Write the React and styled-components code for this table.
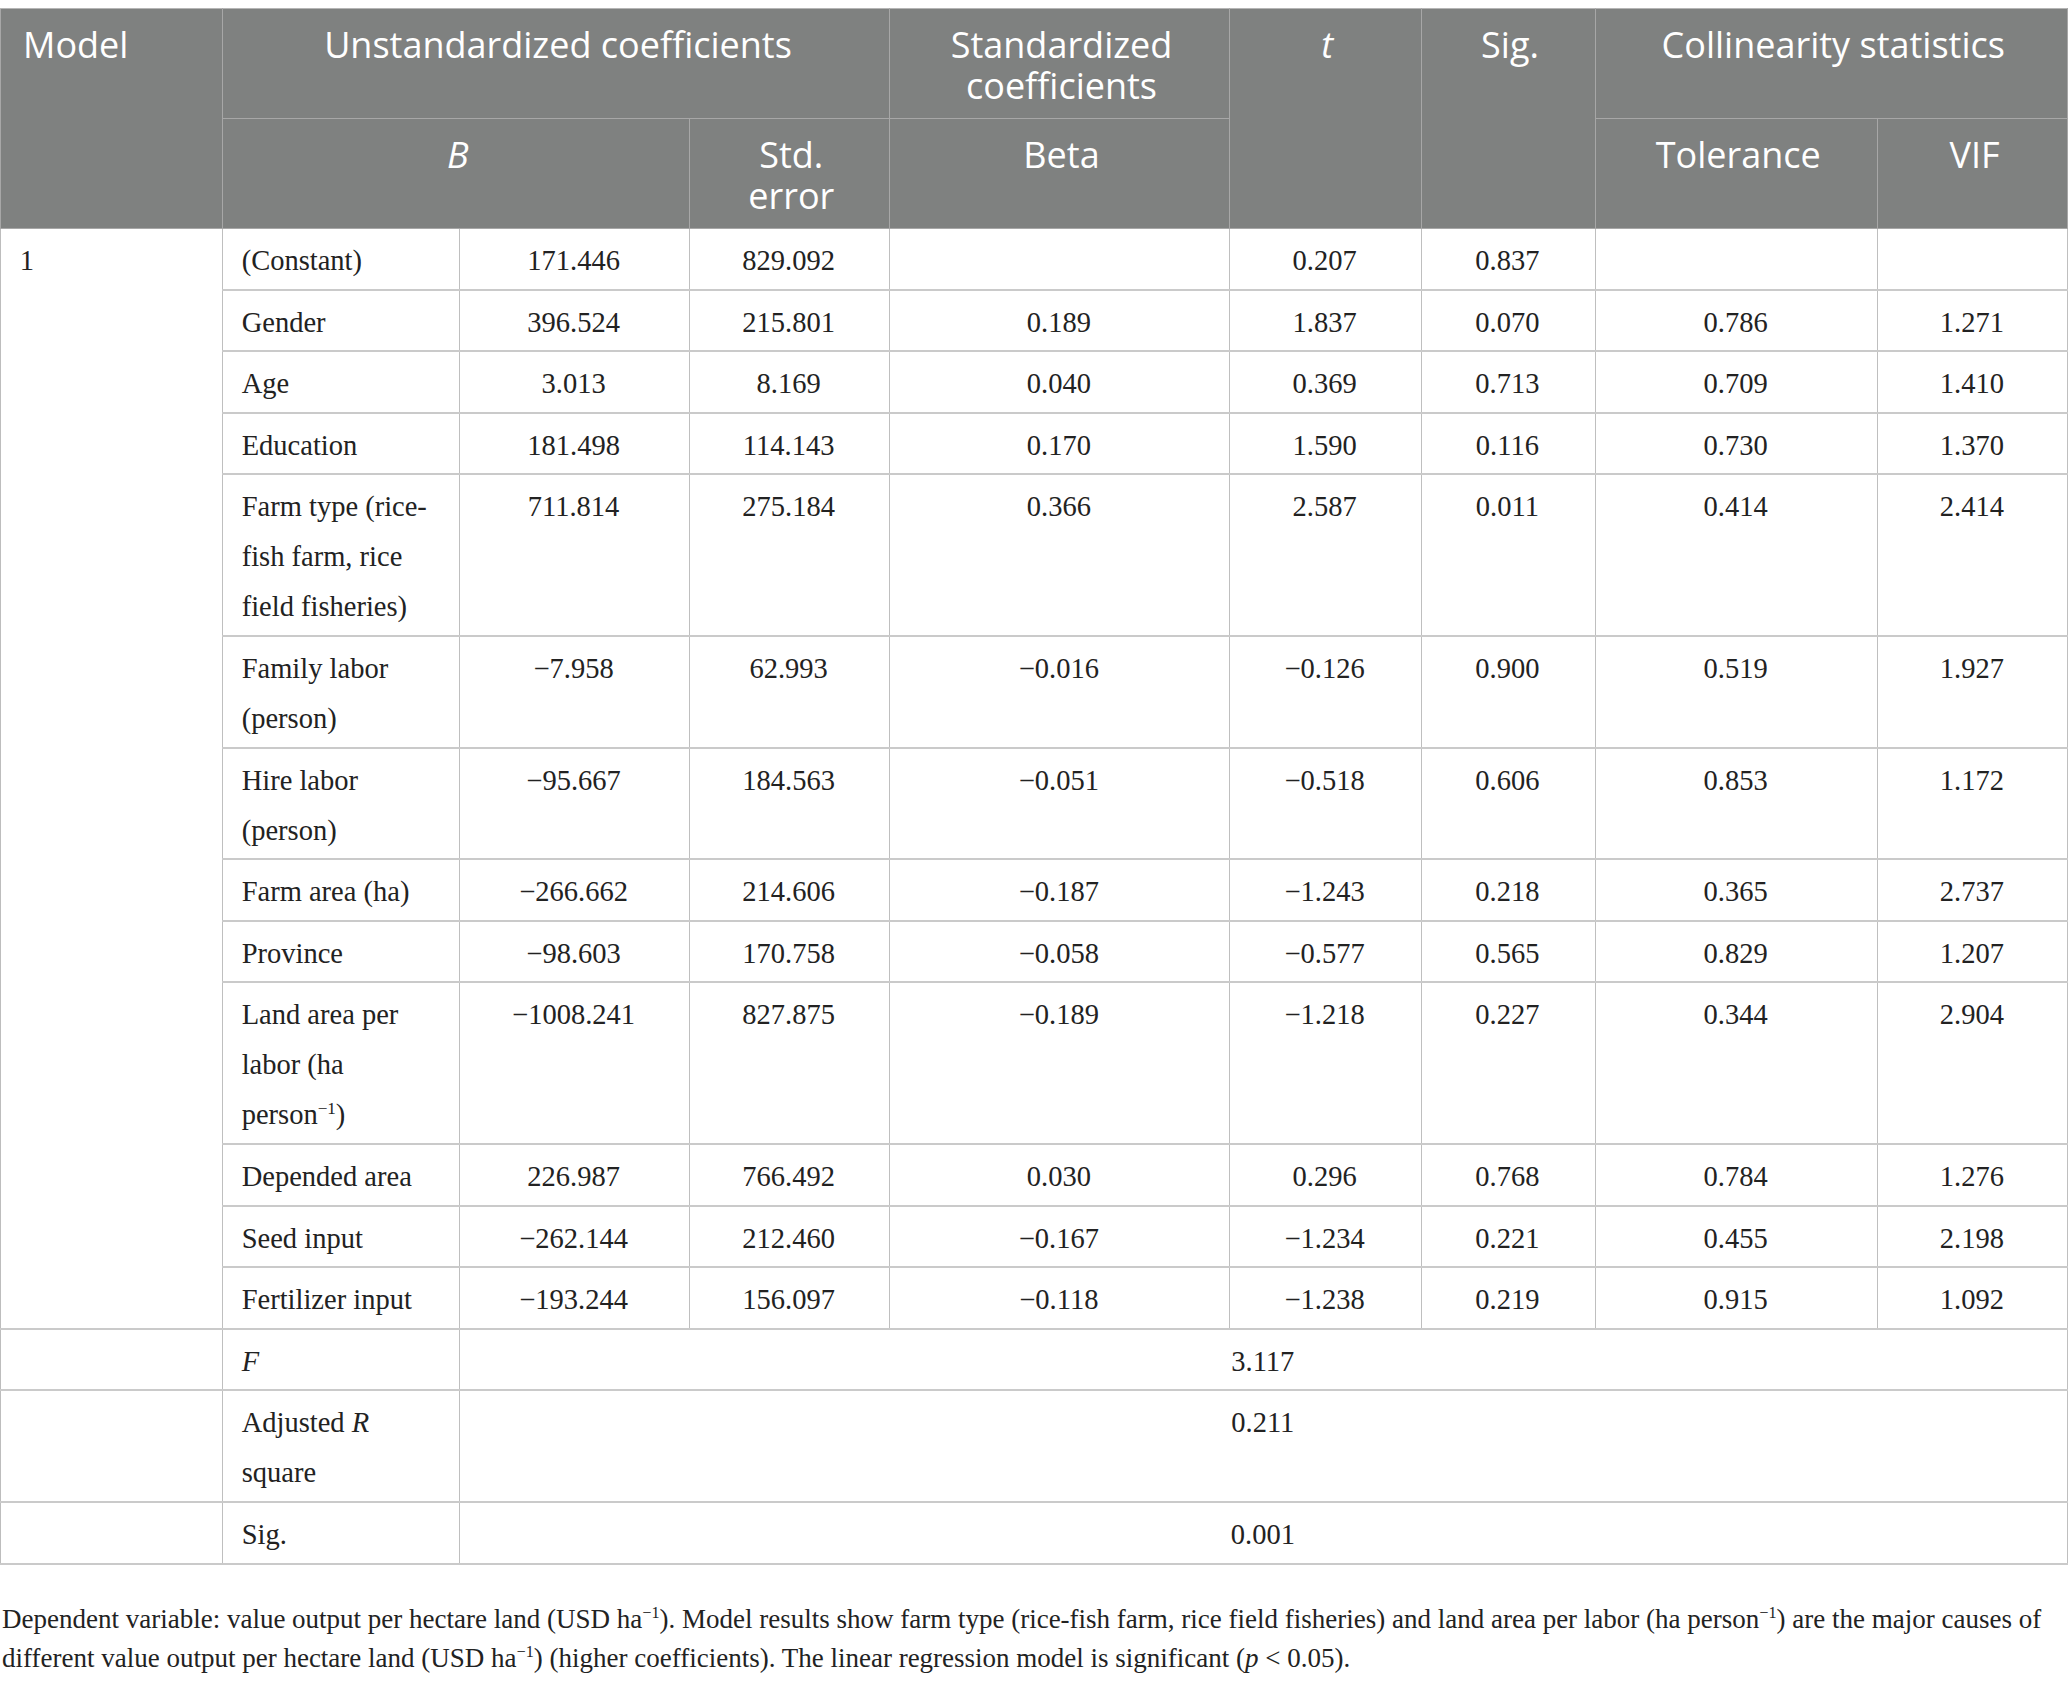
import React from "react";
import styled, { createGlobalStyle } from "styled-components";

const GlobalStyle = createGlobalStyle`
  html, body {
    margin: 0;
    padding: 0;
    background: #fff;
  }
  body {
    padding-top: 8px;
  }
`;

const Page = styled.div`
  width: 2068px;
`;

const Table = styled.table`
  width: 100%;
  table-layout: fixed;
  border-collapse: collapse;
  border: 1px solid #bdbdbd;
`;

const Th = styled.th`
  background-color: #7f8180;
  color: #fff;
  font-family: "Open Sans", "Liberation Sans", sans-serif;
  font-weight: 400;
  font-size: 36px;
  line-height: 41px;
  text-align: ${(p) => p.$align || "center"};
  vertical-align: top;
  padding: 15px 18px 12px 22px;
  border: 1px solid #a7a7a7;
  border-top-color: #b5b5b5;
`;

const Td = styled.td`
  color: #222;
  font-family: "Liberation Serif", "Times New Roman", serif;
  font-size: 28.5px;
  line-height: 50px;
  text-align: ${(p) => p.$align || "center"};
  vertical-align: top;
  padding: 7px 20px 2.6px 18.7px;
  border-right: 1px solid #bfbfbf;
  border-bottom: 2px solid #cacaca;
`;

const Em = styled.i`
  font-style: italic;
`;

const Sup = styled.sup`
  font-size: 0.6em;
  line-height: 0;
  vertical-align: 0.6em;
`;

const Caption = styled.div`
  margin-top: 35px;
  padding-left: 2px;
  color: #222;
  font-family: "Liberation Serif", "Times New Roman", serif;
  font-size: 27px;
  line-height: 39px;
`;

const Line = styled.div`
  white-space: nowrap;
`;

const rows = [
  { label: "(Constant)", b: "171.446", se: "829.092", beta: "", t: "0.207", sig: "0.837", tol: "", vif: "" },
  { label: "Gender", b: "396.524", se: "215.801", beta: "0.189", t: "1.837", sig: "0.070", tol: "0.786", vif: "1.271" },
  { label: "Age", b: "3.013", se: "8.169", beta: "0.040", t: "0.369", sig: "0.713", tol: "0.709", vif: "1.410" },
  { label: "Education", b: "181.498", se: "114.143", beta: "0.170", t: "1.590", sig: "0.116", tol: "0.730", vif: "1.370" },
  { label: "Farm type (rice-fish farm, rice field fisheries)", b: "711.814", se: "275.184", beta: "0.366", t: "2.587", sig: "0.011", tol: "0.414", vif: "2.414" },
  { label: "Family labor (person)", b: "−7.958", se: "62.993", beta: "−0.016", t: "−0.126", sig: "0.900", tol: "0.519", vif: "1.927" },
  { label: "Hire labor (person)", b: "−95.667", se: "184.563", beta: "−0.051", t: "−0.518", sig: "0.606", tol: "0.853", vif: "1.172" },
  { label: "Farm area (ha)", b: "−266.662", se: "214.606", beta: "−0.187", t: "−1.243", sig: "0.218", tol: "0.365", vif: "2.737" },
  { label: "Province", b: "−98.603", se: "170.758", beta: "−0.058", t: "−0.577", sig: "0.565", tol: "0.829", vif: "1.207" },
  {
    label: (
      <>
        Land area per labor (ha person<Sup>−1</Sup>)
      </>
    ),
    b: "−1008.241", se: "827.875", beta: "−0.189", t: "−1.218", sig: "0.227", tol: "0.344", vif: "2.904",
  },
  { label: "Depended area", b: "226.987", se: "766.492", beta: "0.030", t: "0.296", sig: "0.768", tol: "0.784", vif: "1.276" },
  { label: "Seed input", b: "−262.144", se: "212.460", beta: "−0.167", t: "−1.234", sig: "0.221", tol: "0.455", vif: "2.198" },
  { label: "Fertilizer input", b: "−193.244", se: "156.097", beta: "−0.118", t: "−1.238", sig: "0.219", tol: "0.915", vif: "1.092" },
];

const summary = [
  { label: <Em>F</Em>, value: "3.117" },
  { label: <>Adjusted <Em>R</Em> square</>, value: "0.211" },
  { label: "Sig.", value: "0.001" },
];

const App = () => {
  return (
    <>
      <GlobalStyle />
      <Page>
        <Table>
          <colgroup>
            <col style={{ width: "222px" }} />
            <col style={{ width: "237px" }} />
            <col style={{ width: "229.5px" }} />
            <col style={{ width: "200.5px" }} />
            <col style={{ width: "340px" }} />
            <col style={{ width: "191.5px" }} />
            <col style={{ width: "174px" }} />
            <col style={{ width: "282.5px" }} />
            <col />
          </colgroup>
          <thead>
            <tr>
              <Th rowSpan={2} $align="left">Model</Th>
              <Th colSpan={3}>Unstandardized coefficients</Th>
              <Th>
                Standardized
                <br />
                coefficients
              </Th>
              <Th rowSpan={2}>
                <Em>t</Em>
              </Th>
              <Th rowSpan={2}>Sig.</Th>
              <Th colSpan={2}>Collinearity statistics</Th>
            </tr>
            <tr>
              <Th colSpan={2}>
                <Em>B</Em>
              </Th>
              <Th>
                Std.
                <br />
                error
              </Th>
              <Th>Beta</Th>
              <Th>Tolerance</Th>
              <Th>VIF</Th>
            </tr>
          </thead>
          <tbody>
            {rows.map((row, index) => (
              <tr key={index}>
                {index === 0 && (
                  <Td rowSpan={rows.length} $align="left">
                    1
                  </Td>
                )}
                <Td $align="left">{row.label}</Td>
                <Td>{row.b}</Td>
                <Td>{row.se}</Td>
                <Td>{row.beta}</Td>
                <Td>{row.t}</Td>
                <Td>{row.sig}</Td>
                <Td>{row.tol}</Td>
                <Td>{row.vif}</Td>
              </tr>
            ))}
            {summary.map((row, index) => (
              <tr key={"s" + index}>
                <Td />
                <Td $align="left">{row.label}</Td>
                <Td colSpan={7}>{row.value}</Td>
              </tr>
            ))}
          </tbody>
        </Table>
        <Caption>
          <Line>
            Dependent variable: value output per hectare land (USD ha<Sup>−1</Sup>). Model results show farm type
            (rice-fish farm, rice field fisheries) and land area per labor (ha person<Sup>−1</Sup>) are the major
            causes of
          </Line>
          <Line>
            different value output per hectare land (USD ha<Sup>−1</Sup>) (higher coefficients). The linear
            regression model is significant (<Em>p</Em> &lt; 0.05).
          </Line>
        </Caption>
      </Page>
    </>
  );
};

export default App;
